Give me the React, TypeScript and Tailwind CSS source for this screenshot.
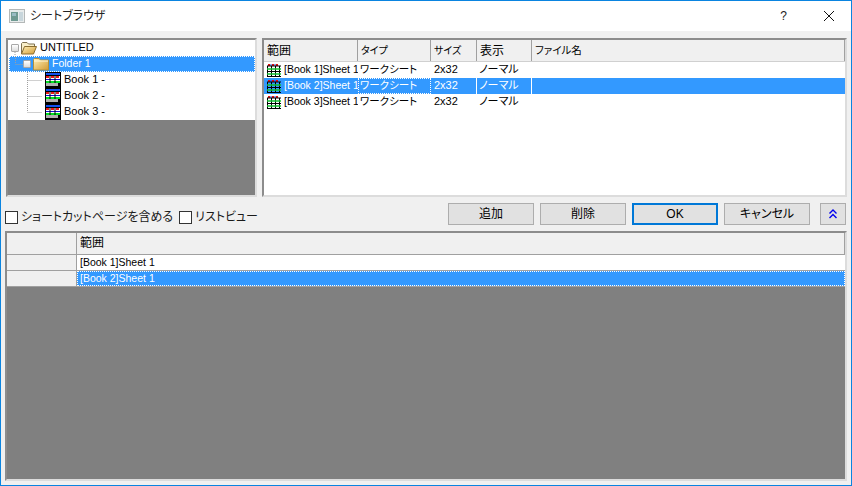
import React from "react";

const font = { fontFamily: '"Liberation Sans", "Noto Sans CJK JP", sans-serif' };

const FolderIcon = ({ open }: { open?: boolean }) => (
  <svg width="16" height="14" viewBox="0 0 16 14" className="shrink-0">
    <defs>
      <linearGradient id="fold" x1="0" y1="0" x2="1" y2="1">
        <stop offset="0" stopColor="#fff0b8" />
        <stop offset="1" stopColor="#d29a32" />
      </linearGradient>
    </defs>
    {open ? (
      <>
        <path d="M0.5 13V2.5L1.5 1.5H6L7.5 3H13.5V6" fill="#f8eec8" stroke="#7d7050" />
        <path d="M0.5 13L3.5 5.5H15.5L12.5 13Z" fill="url(#fold)" stroke="#8a6d30" />
      </>
    ) : (
      <>
        <path d="M0.5 13V2.5L1.5 1.5H6L7.5 3H15.5V13Z" fill="url(#fold)" stroke="#b09040" />
        <path d="M1 4H15" stroke="#fff8dc" />
      </>
    )}
  </svg>
);

// small sheet icon of the list
const SheetIcon = () => (
  <svg width="16" height="15" viewBox="0 0 16 15" className="shrink-0">
    <path d="M3 1V3M7 1V3M11 1V3" stroke="#e01010" strokeWidth="2" />
    <path d="M5 1V3M9 1V3" stroke="#2040e0" />
    <path d="M1 3H15M1 8.5H15M1 13.5H15" stroke="#000" />
    <path d="M1.5 3V14M5.5 3V14M9.5 3V14M13.5 3V14" stroke="#000" />
    <path d="M1 6H15M1 11H15" stroke="#10c030" strokeWidth="1.4" />
  </svg>
);

// book icon of the tree
const BookIcon = () => (
  <svg width="16" height="16" viewBox="0 0 16 16" className="shrink-0">
    <rect x="0" y="0" width="16" height="16" fill="#000" />
    <rect x="1" y="1" width="14" height="2" fill="#1050f0" />
    <rect x="1" y="4" width="14" height="7" fill="#fff" />
    <rect x="1" y="4" width="3" height="2" fill="#e81818" />
    <rect x="6" y="4" width="3" height="2" fill="#e81818" />
    <rect x="11" y="4" width="3" height="2" fill="#e81818" />
    <path d="M1 7.5H15" stroke="#1010d0" />
    <path d="M1 10H15" stroke="#00e020" strokeWidth="2" />
    <path d="M5 4V11M10 4V11" stroke="#000" />
    <rect x="1" y="11" width="12" height="3" fill="#b0b0b0" />
  </svg>
);

const Expander = () => (
  <span className="block w-[8px] h-[8px] shrink-0 rounded-[1px] border border-[#a8a8a8] bg-gradient-to-b from-white to-[#dcdcdc]" />
);

const dots = { stroke: "#a0a0a0", strokeDasharray: "1 1" };

const TreeRoot = () => (
  <div className="h-[16px] flex items-center text-black">
    <div className="relative w-[10px] h-[16px] ml-[2px] flex items-center">
      <Expander />
      {/* dotted line going down to the folder */}
      <svg width="2" height="4" className="absolute left-[3px] top-[12px]">
        <path d="M1 0V4" {...dots} fill="none" />
      </svg>
    </div>
    <FolderIcon open />
    <span className="ml-[3px] text-[11px] pb-[1px]">UNTITLED</span>
  </div>
);

const TreeFolder = () => (
  <div className="h-[16px] flex items-center bg-[#3399ff] text-white outline-dotted outline-1 -outline-offset-1 outline-white">
    <svg width="14" height="16" className="shrink-0">
      <path d="M6.5 0V8M6.5 8.5H14" {...dots} fill="none" />
    </svg>
    <Expander />
    <span className="w-[2px]" />
    <FolderIcon />
    <span className="ml-[3px] text-[10.5px] pb-[1px]">Folder 1</span>
  </div>
);

const TreeBook = ({ name, last }: { name: string; last?: boolean }) => (
  <div className="h-[16px] flex items-center text-black">
    <svg width="36" height="16" className="shrink-0">
      <path d={last ? "M18.5 0V8M18.5 8.5H33" : "M18.5 0V16M18.5 8.5H33"} {...dots} fill="none" />
    </svg>
    <BookIcon />
    <span className="ml-[3px] text-[11px] pb-[1px]">{name}</span>
  </div>
);

const sunken = "border-2 border-t-[#8c8c8c] border-l-[#8c8c8c] border-r-[#dcdcdc] border-b-[#dcdcdc]";

const HeaderCell = ({ label, cls }: { label: string; cls: string }) => (
  <div className={cls + " h-full bg-[#f0f0f0] border-r border-[#a0a0a0] pl-[3px] flex items-center"}>{label}</div>
);

const ListRow = ({ book, selected }: { book: number; selected?: boolean }) => (
  <div className={"h-[16px] flex items-center " + (selected ? "bg-[#3399ff] text-white" : "text-black")}>
    <div className="w-[94px] flex items-center pl-[2px] whitespace-nowrap overflow-hidden">
      <SheetIcon />
      <span className="ml-[2px] text-[10.5px] pb-[1px]">[Book {book}]Sheet 1</span>
    </div>
    <div className={"w-[73px] h-full flex items-center pl-[2px] pb-[1px] text-[10.5px] " + (selected ? "outline-dotted outline-1 -outline-offset-1 outline-white" : "")}>ワークシート</div>
    <div className={"w-[46px] h-full flex items-center pl-[3px] pb-[1px] text-[11px] " + (selected ? "border-r border-white" : "")}>2x32</div>
    <div className={"w-[55px] h-full flex items-center pl-[2px] pb-[1px] text-[11px] " + (selected ? "border-r border-white" : "")}>ノーマル</div>
    <div className="flex-1" />
  </div>
);

const Check = ({ label }: { label: string }) => (
  <label className="flex items-center text-[#1a1a1a]">
    <span className="block w-[13px] h-[13px] bg-white border border-[#333]" />
    <span className="ml-[3px]">{label}</span>
  </label>
);

const Btn = ({ label, primary }: { label: string; primary?: boolean }) => (
  <button
    className={
      "w-[86px] h-[22px] flex items-center justify-center bg-[#e1e1e1] text-black " +
      (primary ? "border-2 border-[#0078d7]" : "border border-[#adadad]")
    }
  >
    {label}
  </button>
);

const GridRow = ({ text, selected }: { text: string; selected?: boolean }) => (
  <div className="h-[16px] flex border-b border-[#a0a0a0]">
    <div className="w-[70px] shrink-0 bg-[#f0f0f0] border-r border-[#a0a0a0]" />
    <div
      className={
        "flex-1 flex items-center pl-[3px] pb-[1px] text-[10.5px] " +
        (selected ? "bg-[#3399ff] text-white outline-dotted outline-1 -outline-offset-1 outline-white" : "bg-white text-black")
      }
    >
      {text}
    </div>
  </div>
);

export default function App() {
  return (
    <div style={font} className="w-[852px] h-[486px] flex flex-col bg-[#f0f0f0] border border-[#0a84e0] text-[12px] leading-none overflow-hidden [font-feature-settings:'palt']">
      {/* title bar */}
      <div className="h-[30px] shrink-0 bg-white flex items-center">
        <svg width="16" height="14" viewBox="0 0 16 14" className="ml-[8px] shrink-0">
          <rect x="0.5" y="0.5" width="15" height="13" fill="#e8ecec" stroke="#b4b8b8" />
          <rect x="2" y="3" width="7" height="9" fill="#6f9a92" />
          <rect x="3" y="4" width="4" height="3" fill="#9abcc4" />
          <rect x="10" y="3" width="4" height="9" fill="#c8d6dc" />
        </svg>
        <span className="ml-[5px] text-[#222]">シートブラウザ</span>
        <span className="ml-auto mr-[36px] text-[12px] text-[#222]">?</span>
        <svg width="12" height="12" viewBox="0 0 12 12" className="mr-[16px]">
          <path d="M1 1L11 11M11 1L1 11" stroke="#111" strokeWidth="1" fill="none" />
        </svg>
      </div>

      <div className="flex-1 flex flex-col px-[4px] pt-[7px] min-h-0">
        {/* top panes */}
        <div className="flex h-[159px] shrink-0 pl-[1px]">
          <div className={"w-[251px] shrink-0 bg-[#808080] " + sunken}>
            <div className="bg-white pl-[1px]">
              <TreeRoot />
              <TreeFolder />
              <TreeBook name="Book 1 -" />
              <TreeBook name="Book 2 -" />
              <TreeBook name="Book 3 -" last />
            </div>
          </div>
          <div className={"ml-[5px] w-[585px] shrink-0 bg-white " + sunken}>
            <div className="h-[22px] flex border-b border-[#d0d0d0]">
              <HeaderCell label="範囲" cls="w-[94px]" />
              <HeaderCell label="タイプ" cls="w-[73px] text-[10px]" />
              <HeaderCell label="サイズ" cls="w-[46px] text-[10px]" />
              <HeaderCell label="表示" cls="w-[55px]" />
              <HeaderCell label="ファイル名" cls="flex-1 text-[10.5px]" />
            </div>
            <ListRow book={1} />
            <ListRow book={2} selected />
            <ListRow book={3} />
          </div>
        </div>

        {/* options and buttons */}
        <div className="h-[34px] shrink-0 flex items-center">
          <div className="flex items-center gap-[6px] mt-[6px]">
            <Check label="ショートカットページを含める" />
            <Check label="リストビュー" />
          </div>
          <div className="ml-auto flex items-center gap-[6px] -mt-[1px]">
            <Btn label="追加" />
            <Btn label="削除" />
            <Btn label="OK" primary />
            <Btn label="キャンセル" />
            <button className="ml-[4px] mr-[1px] w-[26px] h-[22px] flex items-center justify-center bg-[#e1e1e1] border border-[#adadad]">
              <svg width="8" height="10" viewBox="0 0 8 10">
                <path d="M0.5 4.5L4 1L7.5 4.5M0.5 9L4 5.5L7.5 9" stroke="#0000ee" strokeWidth="1.4" fill="none" />
              </svg>
            </button>
          </div>
        </div>

        {/* bottom grid */}
        <div className={"w-[842px] h-[250px] shrink-0 bg-[#808080] " + sunken}>
          <div className="h-[22px] flex border-b border-[#a0a0a0] bg-[#f0f0f0]">
            <div className="w-[70px] shrink-0 border-r border-[#a0a0a0]" />
            <div className="flex-1 flex items-center pl-[3px] pb-[1px] text-black border-r border-[#a0a0a0]">範囲</div>
          </div>
          <GridRow text="[Book 1]Sheet 1" />
          <GridRow text="[Book 2]Sheet 1" selected />
        </div>
      </div>
    </div>
  );
}
